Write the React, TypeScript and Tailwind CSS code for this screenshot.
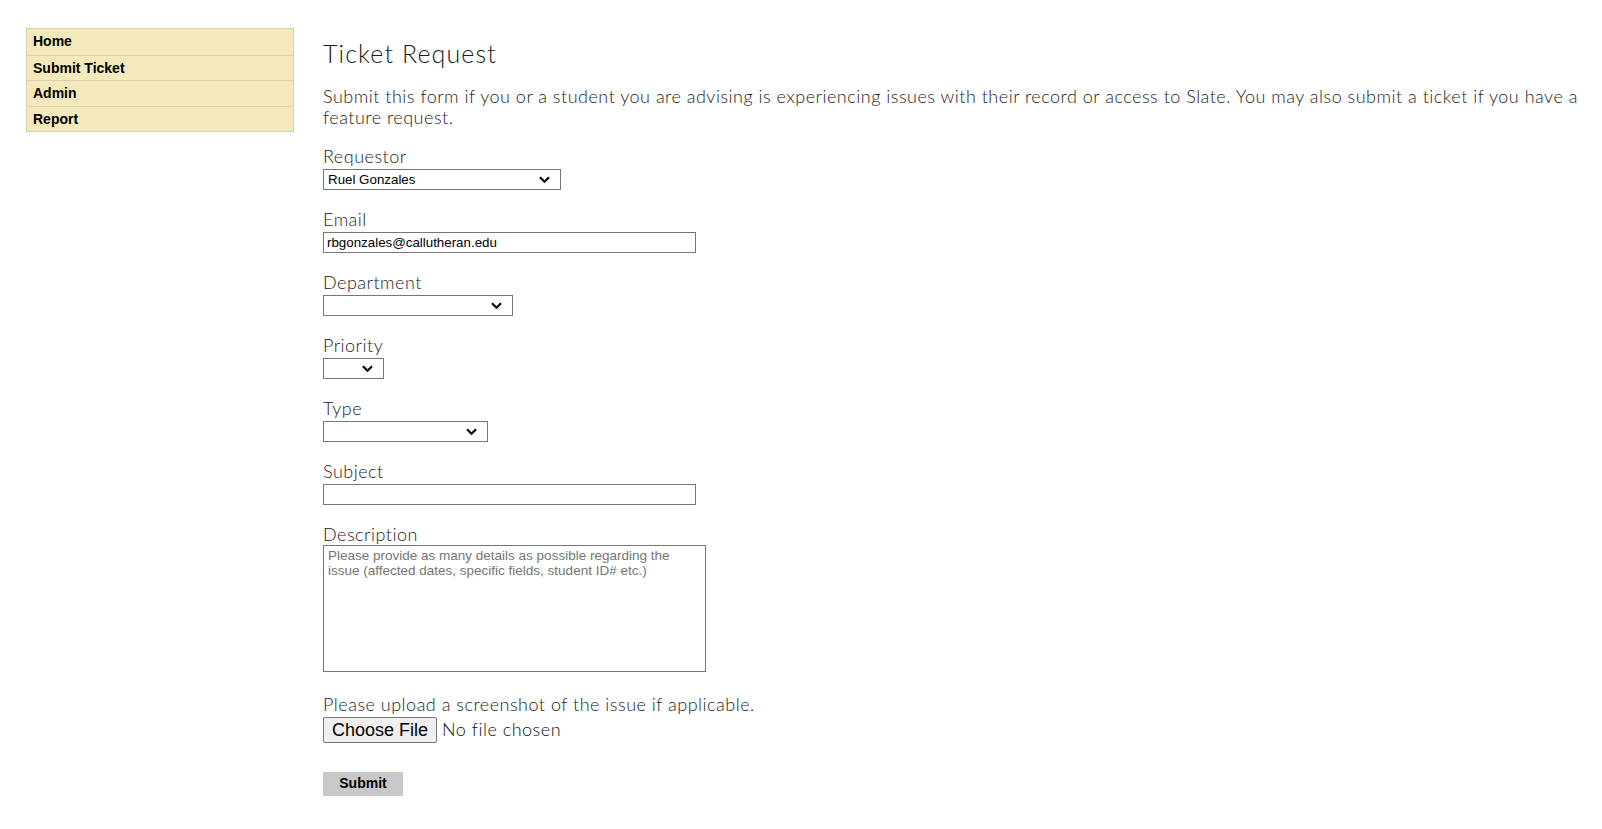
import { useState } from "react"

const navItems = ["Home", "Submit Ticket", "Admin", "Report"]

const requestors = ["Ruel Gonzales"]
const departments = ["", "Admissions", "Registrar", "Financial Aid", "Advising"]
const priorities = ["", "Low", "Medium", "High"]
const types = ["", "Record Issue", "Access Issue", "Feature Request"]

const raleway = "font-['Lato','Open_Sans',sans-serif] font-light tracking-[0.5px]"
const arial = "font-['Liberation_Sans',Arial,sans-serif]"

function Field({ label, children }: { label: string; children: React.ReactNode }) {
  return (
    <div className="mb-[19px]">
      <label className={`block text-[18px] leading-[20px] text-[#222] mb-[3px] ${raleway}`}>{label}</label>
      {children}
    </div>
  )
}

function Select({ options, width, value }: { options: string[]; width: string; value?: string }) {
  return (
    <div className={`relative ${width} h-[21px]`}>
      <select
        defaultValue={value}
        className={`block w-full h-full appearance-none border border-[#767676] bg-white pl-[4px] pr-[24px] text-[13.33px] text-black tracking-normal font-normal ${arial}`}
      >
        {options.map((o) => (
          <option key={o} value={o}>
            {o}
          </option>
        ))}
      </select>
      <svg
        className="pointer-events-none absolute right-[11px] top-[7px] w-[11px] h-[7px]"
        viewBox="0 0 11 7"
        fill="none"
        stroke="#000"
        strokeWidth="2.2"
      >
        <path d="M1 1.2l4.5 4.5 4.5-4.5" />
      </svg>
    </div>
  )
}

export default function App() {
  const [email, setEmail] = useState("rbgonzales@callutheran.edu")
  const [fileName, setFileName] = useState("")

  return (
    <div className="min-h-screen bg-white flex items-start pt-[28px] pl-[26px] pr-[14px]">
      {/* Sidebar */}
      <nav className="w-[268px] shrink-0 border border-[#d9cfa8] bg-[#f3e9bd]">
        {navItems.map((item, i) => (
          <a
            key={item}
            href="#"
            className={`block h-[25.5px] leading-[25px] pl-[6px] text-[14px] font-bold text-black ${arial} ${
              i > 0 ? "border-t border-[#dbd2ad]" : ""
            }`}
          >
            {item}
          </a>
        ))}
      </nav>

      {/* Main form */}
      <main className={`ml-[29px] flex-1 pt-[10px] text-[#222] ${raleway}`}>
        <h1 className="text-[25px] leading-[30px] text-[#1a1a1a] mb-[18px] tracking-[1.1px]">Ticket Request</h1>
        <p className="text-[18px] leading-[21px] mb-[18px]">
          Submit this form if you or a student you are advising is experiencing issues with their record or access
          to Slate. You may also submit a ticket if you have a feature request.
        </p>

        <form onSubmit={(e) => e.preventDefault()}>
          <Field label="Requestor">
            <Select options={requestors} width="w-[238px]" value="Ruel Gonzales" />
          </Field>
          <Field label="Email">
            <input
              type="email"
              value={email}
              onChange={(e) => setEmail(e.target.value)}
              className={`block w-[373px] h-[21px] border border-[#767676] px-[3px] text-[13.33px] text-black tracking-normal font-normal ${arial}`}
            />
          </Field>
          <Field label="Department">
            <Select options={departments} width="w-[190px]" />
          </Field>
          <Field label="Priority">
            <Select options={priorities} width="w-[61px]" />
          </Field>
          <Field label="Type">
            <Select options={types} width="w-[165px]" />
          </Field>
          <Field label="Subject">
            <input
              type="text"
              className={`block w-[373px] h-[21px] border border-[#767676] px-[3px] text-[13.33px] text-black tracking-normal font-normal ${arial}`}
            />
          </Field>
          <div className="mb-[22px]">
            <label className="block text-[18px] leading-[20px] mb-[1px]">Description</label>
            <textarea
              placeholder="Please provide as many details as possible regarding the issue (affected dates, specific fields, student ID# etc.)"
              className={`block w-[383px] h-[127px] border border-[#767676] pl-[4px] pr-[8px] py-[2px] text-[13.5px] leading-[15px] text-black tracking-normal font-normal placeholder:text-[#757575] resize-none ${arial}`}
            />
          </div>

          <div className="mb-[27px]">
            <p className="text-[18px] leading-[20px] mb-[2px]">Please upload a screenshot of the issue if applicable.</p>
            <label className="inline-flex items-center cursor-pointer">
              <input
                type="file"
                className="hidden"
                onChange={(e) => setFileName(e.target.files?.[0]?.name ?? "")}
              />
              <span
                className={`h-[26px] px-[8px] leading-[24px] border border-[#767676] rounded-[2px] bg-[#efefef] text-[18px] text-black tracking-normal font-normal ${arial}`}
              >
                Choose File
              </span>
              <span className="ml-[5px] text-[18px] text-[#111]">{fileName || "No file chosen"}</span>
            </label>
          </div>

          <button
            type="submit"
            className={`w-[80px] h-[24px] bg-[#c8c8c8] text-[14px] font-bold text-black tracking-normal ${arial}`}
          >
            Submit
          </button>
        </form>
      </main>
    </div>
  )
}
